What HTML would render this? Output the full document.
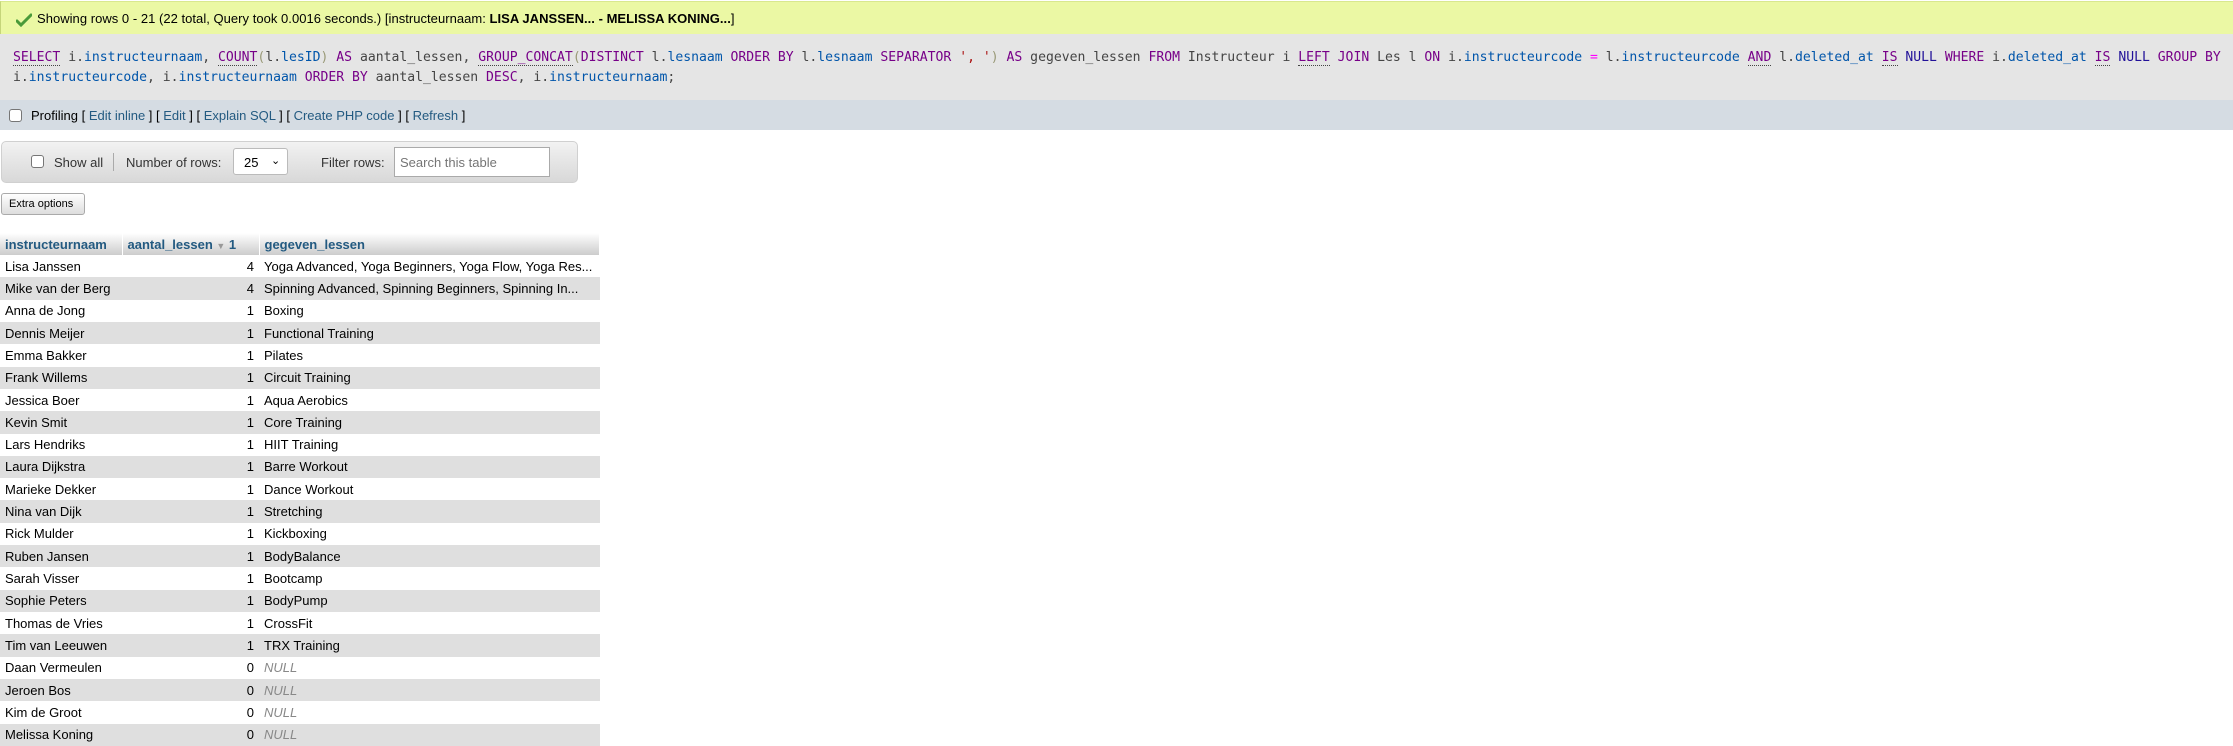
<!DOCTYPE html>
<html><head><meta charset="utf-8"><style>
*{box-sizing:border-box;margin:0;padding:0}
body{width:2233px;height:746px;background:#fff;font-family:"Liberation Sans",Arial,sans-serif;font-size:13px;color:#000;position:relative;overflow:hidden}
.ok{position:absolute;left:0;top:1px;width:2233px;height:33px;background:#ebf8a4;border-left:1px solid #c5d57a;border-top:1px solid #d9e88f}
.ok span{position:absolute;left:36px;top:9px;white-space:nowrap;letter-spacing:0.03px}
.ok svg{position:absolute;left:15px;top:11px}
.sql{position:absolute;left:0;top:34px;width:2233px;height:66px;background:#e5e5e5}
.sql pre{position:absolute;left:13px;top:14px;font-family:"DejaVu Sans Mono","Liberation Mono",monospace;font-size:13.1px;line-height:20px;color:#444;white-space:pre}
.k{color:#708}.f{color:#708;border-bottom:1px dotted #444}.u{border-bottom:1px dotted #444}.v{color:#05a}.s{color:#a11}.p{color:#997}.o{color:#f0f}.n{color:#219}
.prof{position:absolute;left:0;top:100px;width:2233px;height:30px;background:#d5dce3}
.prof span{position:absolute;left:31px;top:8px;white-space:nowrap}
a{color:#235a81;text-decoration:none}
.cb{position:absolute;width:13px;height:13px;border:1px solid #767676;border-radius:3px;background:#fff}
.nav{position:absolute;left:1px;top:141px;width:577px;height:42px;border-radius:5px;background:linear-gradient(#f2f2f2,#d8d8d8);border:1px solid #d0d0d0}
.nav .t{position:absolute;top:13px;white-space:nowrap;color:#333}
.sel{position:absolute;left:231px;top:6px;width:55px;height:27px;background:#fff;border:1px solid #bbb;border-radius:3px;padding:6px 0 0 10px}
.inp{position:absolute;left:392px;top:5px;width:156px;height:30px;background:#fff;border:1px solid #aaa;padding:7px 5px;color:#757575}
.btn{position:absolute;left:1px;top:193px;width:84px;height:22px;border:1px solid #aaa;border-radius:3px;background:linear-gradient(#fff,#ddd);font-size:11px;padding:4px 0 0 7px}
table{position:absolute;left:0;top:233px;border-collapse:collapse;width:600px}
th{height:22px;text-align:left;color:#235a81;background:linear-gradient(#fff,#ccc);padding:0 5px;font-weight:bold;border-right:1px solid #fff}
td{height:22.32px;padding:0 5px;white-space:nowrap}
tr:nth-child(odd) td{background:#dfdfdf}
td.r{text-align:right}
td.nl{color:#888;font-style:italic}
</style></head><body>
<div class="ok"><svg width="16" height="14" viewBox="0 0 16 14"><path d="M1 8 L5 12 L15 2" stroke="#4a9a3a" stroke-width="3" fill="none" stroke-linecap="round"/></svg><span>Showing rows 0 - 21 (22 total, Query took 0.0016 seconds.) [instructeurnaam: <b>LISA JANSSEN... - MELISSA KONING...</b>]</span></div>
<div class="sql"><pre><span class="k u">SELECT</span> i.<span class="v">instructeurnaam</span>, <span class="f">COUNT</span><span class="p">(</span>l.<span class="v">lesID</span><span class="p">)</span> <span class="k">AS</span> aantal_lessen, <span class="f">GROUP_CONCAT</span><span class="p">(</span><span class="k">DISTINCT</span> l.<span class="v">lesnaam</span> <span class="k">ORDER BY</span> l.<span class="v">lesnaam</span> <span class="k">SEPARATOR</span> <span class="s">', '</span><span class="p">)</span> <span class="k">AS</span> gegeven_lessen <span class="k">FROM</span> Instructeur i <span class="k u">LEFT</span> <span class="k">JOIN</span> Les l <span class="k">ON</span> i.<span class="v">instructeurcode</span> <span class="o">=</span> l.<span class="v">instructeurcode</span> <span class="k u">AND</span> l.<span class="v">deleted_at</span> <span class="k u">IS</span> <span class="n">NULL</span> <span class="k">WHERE</span> i.<span class="v">deleted_at</span> <span class="k u">IS</span> <span class="n">NULL</span> <span class="k">GROUP BY</span>
i.<span class="v">instructeurcode</span>, i.<span class="v">instructeurnaam</span> <span class="k">ORDER BY</span> aantal_lessen <span class="k">DESC</span>, i.<span class="v">instructeurnaam</span>;</pre></div>
<div class="prof"><div class="cb" style="left:9px;top:9px"></div><span>Profiling [ <a>Edit inline</a> ] [ <a>Edit</a> ] [ <a>Explain SQL</a> ] [ <a>Create PHP code</a> ] [ <a>Refresh</a> ]</span></div>
<div class="nav"><div class="cb" style="left:29px;top:13px"></div><span class="t" style="left:52px">Show all</span><div style="position:absolute;left:111px;top:11px;width:1px;height:18px;background:#aaa"></div><span class="t" style="left:124px">Number of rows:</span><div class="sel">25 <span style="position:absolute;left:37px;top:5px;font-size:11px">&#8964;</span></div><span class="t" style="left:319px">Filter rows:</span><div class="inp">Search this table</div></div>
<div class="btn">Extra options</div>
<table>
<tr><th style="width:122px">instructeurnaam</th><th style="width:137px">aantal_lessen <span style="color:#999;font-size:9px">&#9660;</span> 1</th><th>gegeven_lessen</th></tr>
<tr><td>Lisa Janssen</td><td class="r">4</td><td>Yoga Advanced, Yoga Beginners, Yoga Flow, Yoga Res...</td></tr>
<tr><td>Mike van der Berg</td><td class="r">4</td><td>Spinning Advanced, Spinning Beginners, Spinning In...</td></tr>
<tr><td>Anna de Jong</td><td class="r">1</td><td>Boxing</td></tr>
<tr><td>Dennis Meijer</td><td class="r">1</td><td>Functional Training</td></tr>
<tr><td>Emma Bakker</td><td class="r">1</td><td>Pilates</td></tr>
<tr><td>Frank Willems</td><td class="r">1</td><td>Circuit Training</td></tr>
<tr><td>Jessica Boer</td><td class="r">1</td><td>Aqua Aerobics</td></tr>
<tr><td>Kevin Smit</td><td class="r">1</td><td>Core Training</td></tr>
<tr><td>Lars Hendriks</td><td class="r">1</td><td>HIIT Training</td></tr>
<tr><td>Laura Dijkstra</td><td class="r">1</td><td>Barre Workout</td></tr>
<tr><td>Marieke Dekker</td><td class="r">1</td><td>Dance Workout</td></tr>
<tr><td>Nina van Dijk</td><td class="r">1</td><td>Stretching</td></tr>
<tr><td>Rick Mulder</td><td class="r">1</td><td>Kickboxing</td></tr>
<tr><td>Ruben Jansen</td><td class="r">1</td><td>BodyBalance</td></tr>
<tr><td>Sarah Visser</td><td class="r">1</td><td>Bootcamp</td></tr>
<tr><td>Sophie Peters</td><td class="r">1</td><td>BodyPump</td></tr>
<tr><td>Thomas de Vries</td><td class="r">1</td><td>CrossFit</td></tr>
<tr><td>Tim van Leeuwen</td><td class="r">1</td><td>TRX Training</td></tr>
<tr><td>Daan Vermeulen</td><td class="r">0</td><td class="nl">NULL</td></tr>
<tr><td>Jeroen Bos</td><td class="r">0</td><td class="nl">NULL</td></tr>
<tr><td>Kim de Groot</td><td class="r">0</td><td class="nl">NULL</td></tr>
<tr><td>Melissa Koning</td><td class="r">0</td><td class="nl">NULL</td></tr>
</table>
</body></html>
